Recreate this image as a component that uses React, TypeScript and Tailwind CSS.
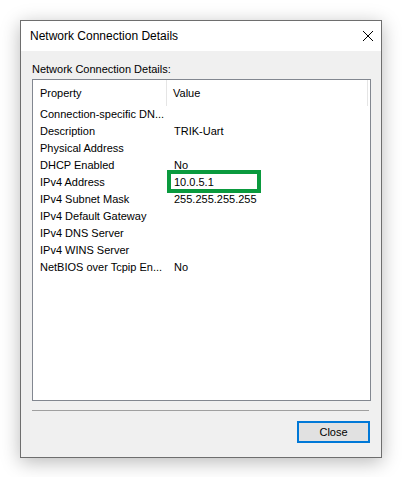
import React from "react";

const rows: [string, string][] = [
  ["Connection-specific DN...", ""],
  ["Description", "TRIK-Uart"],
  ["Physical Address", ""],
  ["DHCP Enabled", "No"],
  ["IPv4 Address", "10.0.5.1"],
  ["IPv4 Subnet Mask", "255.255.255.255"],
  ["IPv4 Default Gateway", ""],
  ["IPv4 DNS Server", ""],
  ["IPv4 WINS Server", ""],
  ["NetBIOS over Tcpip En...", "No"],
];

export default function App() {
  return (
    <div
      className="w-[402px] h-[477px] bg-white pl-[20px] pt-[20px] text-[11px] text-black"
      style={{ fontFamily: '"Liberation Sans", Arial, sans-serif' }}
    >
      <div className="w-[362px] h-[438px] border border-[#6e6e6e] bg-[#f0f0f0] flex flex-col shadow-[0_4px_18px_rgba(0,0,0,0.28)]">
        {/* title bar */}
        <div className="h-[30px] bg-white flex items-center justify-between pl-[9px] pr-[8px]">
          <span className="text-[12px] leading-none">Network Connection Details</span>
          <svg width="12" height="12" viewBox="0 0 12 12" className="-mr-[1px]">
            <path d="M1 1 L11 11 M11 1 L1 11" stroke="#000" strokeWidth="1" />
          </svg>
        </div>

        {/* body */}
        <div className="flex flex-col flex-1 px-[11px] pt-[10px]">
          <div className="h-[17px] leading-[17px]">Network Connection Details:</div>
          <div className="relative mt-[1px] h-[322px] w-[339px] border border-[#828790] bg-white">
            <div className="flex h-[26px] items-center">
              <div className="w-[134px] h-full pl-[7px] flex items-center border-r border-[#e5e5e5]">
                Property
              </div>
              <div className="flex-1 h-full pl-[6px] flex items-center border-r border-[#e5e5e5] mr-[2px]">
                Value
              </div>
            </div>
            {rows.map(([k, v]) => (
              <div key={k} className="flex h-[17px] items-center">
                <div className="w-[134px] pl-[7px] whitespace-nowrap">{k}</div>
                <div className="pl-[7px] whitespace-nowrap">{v}</div>
              </div>
            ))}
            {/* highlight annotation */}
            <div className="absolute left-[134px] top-[90px] w-[94px] h-[23px] border-[4px] border-[#0a9a3e]" />
          </div>
          <div className="mt-[9px] w-[337px] border-t border-[#a0a0a0]" />
          <div className="flex justify-end mt-[10px]">
            <button className="w-[73px] h-[22px] border-2 border-[#0078d7] bg-[#e1e1e1] text-[11px] leading-none">
              Close
            </button>
          </div>
        </div>
      </div>
    </div>
  );
}
